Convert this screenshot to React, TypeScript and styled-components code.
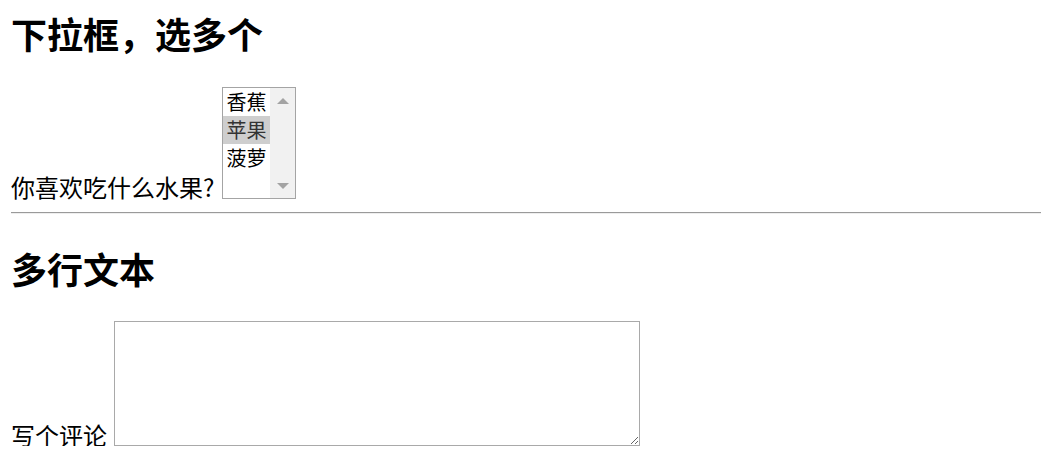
import styled, { createGlobalStyle } from "styled-components";

const GlobalStyle = createGlobalStyle`
  html, body {
    margin: 0;
    background: #ffffff;
  }
  body {
    font-family: "Noto Sans CJK SC", "Liberation Sans", sans-serif;
    color: #000000;
  }
`;

const Page = styled.div`
  padding: 0 12px 0 11px;
`;

const Heading = styled.h2<{ $top: number }>`
  margin: ${(p) => p.$top}px 0 0;
  font-size: 36px;
  font-weight: 700;
  line-height: 36px;
`;

const Field = styled.div<{ $gap: number; $top: number }>`
  display: flex;
  align-items: flex-end;
  gap: ${(p) => p.$gap}px;
  margin-top: ${(p) => p.$top}px;
`;

const Label = styled.label<{ $drop?: number }>`
  font-size: 24px;
  line-height: 24px;
  margin-bottom: ${(p) => -(p.$drop ?? 0)}px;
`;

const ListBox = styled.div`
  display: flex;
  width: 74px;
  height: 112px;
  box-sizing: border-box;
  border: 1px solid #a4a4a4;
  background: #ffffff;
`;

const Options = styled.ul`
  flex: 1;
  margin: 0;
  padding: 0;
  list-style: none;
`;

const Option = styled.li<{ $selected?: boolean }>`
  height: 28px;
  padding: 0 3px;
  font-size: 20px;
  line-height: 28px;
  color: ${(p) => (p.$selected ? "#333333" : "#000000")};
  background: ${(p) => (p.$selected ? "#cecece" : "transparent")};
`;

const Scrollbar = styled.div`
  width: 25px;
  display: flex;
  flex-direction: column;
  justify-content: space-between;
  background: #f1f1f1;
`;

const Arrow = styled.div<{ $down?: boolean }>`
  height: 25px;
  display: flex;
  align-items: center;
  justify-content: center;

  &::before {
    content: "";
    border-left: 6px solid transparent;
    border-right: 6px solid transparent;
    ${(p) =>
      p.$down ? "border-top: 6px solid #a3a3a3;" : "border-bottom: 6px solid #a3a3a3;"}
  }
`;

const Rule = styled.hr`
  margin: 13px 0 0;
  height: 0;
  border: 0;
  border-top: 1px solid #9a9a9a;
  border-bottom: 1px solid #eeeeee;
`;

const Comment = styled.textarea`
  width: 526px;
  height: 125px;
  box-sizing: border-box;
  margin: 0;
  border: 1px solid #a9a9a9;
  font-family: "Liberation Mono", monospace;
  font-size: 20px;
`;

const fruits = ["香蕉", "苹果", "菠萝"];

export default function App() {
  return (
    <Page>
      <GlobalStyle />
      <Heading $top={15}>下拉框，选多个</Heading>
      <Field $gap={8} $top={36}>
        <Label>你喜欢吃什么水果?</Label>
        <ListBox role="listbox" aria-multiselectable="true">
          <Options>
            {fruits.map((f) => (
              <Option key={f} role="option" $selected={f === "苹果"} aria-selected={f === "苹果"}>
                {f}
              </Option>
            ))}
          </Options>
          <Scrollbar>
            <Arrow />
            <Arrow $down />
          </Scrollbar>
        </ListBox>
      </Field>
      <Rule />
      <Heading $top={36}>多行文本</Heading>
      <Field $gap={7} $top={35}>
        <Label htmlFor="comment" $drop={1}>写个评论</Label>
        <Comment id="comment" />
      </Field>
    </Page>
  );
}
